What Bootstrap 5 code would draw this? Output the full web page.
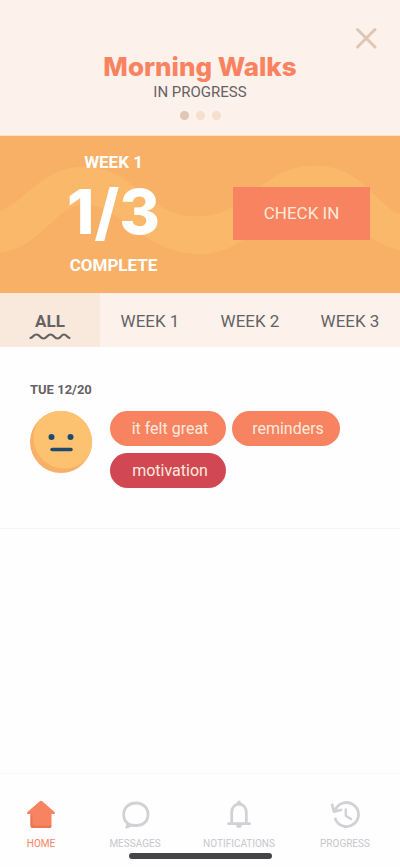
<!DOCTYPE html>
<html lang="en">
<head>
<meta charset="utf-8">
<meta name="viewport" content="width=device-width, initial-scale=1">
<title>Morning Walks</title>
<link href="https://cdn.jsdelivr.net/npm/bootstrap@5.3.0/dist/css/bootstrap.min.css" rel="stylesheet">
<style>
  body { font-family: Roboto, "Liberation Sans", sans-serif; background: #fefdff; color: #666264; font-size: 16px; }
  .goal-head { background: #fdf1ec; padding: 23px 20px 15px; border-bottom: 1px solid #fde0bd; }
  .close-btn { width: 28px; height: 28px; line-height: 0; }
  .goal-title { font-family: Inter, sans-serif; font-weight: 800; font-size: 26px; line-height: 31px; color: #f98360; }
  .goal-state { font-size: 15px; line-height: 20px; }
  .pager { gap: 7px; margin-top: 9px; }
  .pager button { width: 9px; height: 9px; background: #f6dfcc; }
  .pager button.current { background: #dfc6b5; }
  .week-banner { background: #f8b066; color: #fff; padding: 16px 30px 18px 0; }
  .wave { z-index: 0; }
  .banner-row { z-index: 1; }
  .week-label { font-size: 17px; line-height: 20px; font-weight: 700; }
  .week-count { font-family: Inter, sans-serif; font-size: 62px; line-height: 80px; font-weight: 800; margin-bottom: 3px; }
  .week-progress { padding-right: 6px; }
  .check-btn { --bs-btn-bg: #f78360; --bs-btn-color: #fdeadc; --bs-btn-hover-bg: #ee7651; --bs-btn-hover-color: #fff; width: 37%; height: 53px; font-size: 17px; }
  .week-tabs { background: #fdf1ec; }
  .week-tabs .nav-link { height: 54px; padding: 16px 0 0; font-size: 17px; line-height: 24px; color: #666264; border-radius: 0; }
  .week-tabs .nav-link.active { background: #f8e9dc; font-weight: 700; }
  .entry { padding: 34px 30px 40px; border-bottom: 1px solid #f8f3f3; }
  .entry-date { font-size: 13px; line-height: 18px; font-weight: 700; margin-bottom: 12px; }
  .entry-body { gap: 18px; }
  .tags { gap: 7px 6px; }
  .tag-btn { --bs-btn-color: #fdeadf; --bs-btn-hover-color: #fff; min-width: 116px; height: 35px; font-size: 16px; line-height: 20px; padding: 0 16px 0 20px; }
  .tag-btn.narrow { min-width: 108px; }
  .tag-orange { --bs-btn-bg: #f78360; --bs-btn-hover-bg: #ee7651; }
  .tag-red { --bs-btn-bg: #d14852; --bs-btn-hover-bg: #bd3d47; }
  .app-nav { border-top: 1px solid #faf7fa; height: 94px; }
  .app-links { display: grid; grid-template-columns: 41fr 53fr 51fr 55fr; padding-top: 25px; font-size: 10px; line-height: 14px; }
  .app-links a { color: #c9c7c9; gap: 6px; }
  .app-links a.active { color: #f78360; }
  .home-bar { width: 143px; height: 6px; margin-top: 2px; background: #444547; }
</style>
</head>
<body class="d-flex flex-column min-vh-100">
  <header class="goal-head text-center">
    <div class="d-flex justify-content-end">
      <button type="button" class="close-btn btn p-0 border-0" aria-label="Close">
        <svg width="28" height="28" viewBox="0 0 28 28" fill="none" stroke="#dfc6b3" stroke-width="3" stroke-linecap="round"><path d="M5.500 6.500 23 24M23 6.500 5.500 24"/></svg>
      </button>
    </div>
    <h1 class="goal-title m-0">Morning Walks</h1>
    <div class="goal-state">IN PROGRESS</div>
    <div class="pager d-flex justify-content-center">
      <button type="button" class="current border-0 p-0 rounded-circle" aria-label="Page 1"></button>
      <button type="button" class="border-0 p-0 rounded-circle" aria-label="Page 2"></button>
      <button type="button" class="border-0 p-0 rounded-circle" aria-label="Page 3"></button>
    </div>
  </header>

  <main class="flex-grow-1">
    <section class="week-banner position-relative overflow-hidden">
      <svg class="wave position-absolute top-0 start-0 w-100 h-100" viewBox="0 0 400 158" preserveAspectRatio="none" aria-hidden="true">
        <path fill="#fab96a" d="M0 76C28 64 42 31 85 31C135 31 145 81 197 81C250 81 260 30 315 30C362 30 376 70 400 79V115C352 103 354 69 315 69C270 69 248 119 200 119C145 119 120 69 85 69C55 69 40 114 0 117Z"/>
      </svg>
      <div class="banner-row position-relative d-flex align-items-center">
        <div class="week-progress flex-grow-1 text-center">
          <div class="week-label">WEEK 1</div>
          <div class="week-count">1/3</div>
          <div class="week-label">COMPLETE</div>
        </div>
        <button type="button" class="check-btn btn rounded-0 border-0 flex-shrink-0">CHECK IN</button>
      </div>
    </section>

    <nav class="week-tabs nav nav-fill flex-nowrap" aria-label="Weeks">
      <a class="nav-link active w-25 d-flex flex-column align-items-center" href="#all" aria-current="page">ALL
        <svg width="42" height="7" viewBox="0 0 42 7" fill="none" stroke="#666264" stroke-width="2.200" stroke-linecap="round"><path d="M1.500 5C5 4 4 1.500 7.500 1.500S11 5.500 14.500 5.500 18 1.500 21.500 1.500 25 5.500 28.500 5.500 32 1.500 35 1.500 37 4 40.500 5"/></svg>
      </a>
      <a class="nav-link w-25" href="#week1">WEEK 1</a>
      <a class="nav-link w-25" href="#week2">WEEK 2</a>
      <a class="nav-link w-25" href="#week3">WEEK 3</a>
    </nav>

    <article class="entry">
      <h2 class="entry-date">TUE 12/20</h2>
      <div class="entry-body d-flex align-items-start">
        <svg class="flex-shrink-0" width="62" height="62" viewBox="0 0 62 62" role="img" aria-label="Neutral mood">
          <defs><clipPath id="face"><circle cx="31" cy="31" r="31"/></clipPath></defs>
          <g clip-path="url(#face)"><rect width="62" height="62" fill="#f8b066"/><circle cx="34.500" cy="26.500" r="31" fill="#fdc26f"/></g>
          <circle cx="21.500" cy="26" r="3" fill="#1e4a72"/><circle cx="40.500" cy="26" r="3" fill="#1e4a72"/>
          <path d="M22 38.500H41" stroke="#1e4a72" stroke-width="3.500" stroke-linecap="round"/>
        </svg>
        <div class="tags d-flex flex-wrap">
          <button type="button" class="tag-btn tag-orange btn rounded-pill border-0">it felt great</button>
          <button type="button" class="tag-btn tag-orange narrow btn rounded-pill border-0">reminders</button>
          <button type="button" class="tag-btn tag-red btn rounded-pill border-0">motivation</button>
        </div>
      </div>
    </article>
  </main>

  <footer class="app-nav">
    <nav class="app-links" aria-label="Main">
      <a class="active d-flex flex-column align-items-center text-decoration-none" href="#home" aria-current="page">
        <svg width="32" height="32" viewBox="0 0 32 32" fill="#f78360"><path d="M14.500 2.500Q16 1 17.500 2.500L29.500 13Q31 15 28.500 15H26.500V26.500Q26.500 29 24.500 29H8Q5.500 29 5.500 26.500V15H3.500Q1 15 2.500 13Z"/><path fill="#ec7653" d="M5.500 15.500H7.500V25Q7.500 26.500 9.500 26.500H26.500Q26.500 29 24.500 29H8Q5.500 29 5.500 26.500Z"/></svg>
        HOME
      </a>
      <a class="d-flex flex-column align-items-center text-decoration-none" href="#messages">
        <svg width="32" height="32" viewBox="0 0 32 32" fill="none" stroke="#d3d1d3" stroke-width="2.800" stroke-linejoin="round"><path d="M7.800 23.500C5.500 21.500 4.700 18.500 4.700 15.500 4.700 8.500 10 4 17 4S29 8.500 29 15.500 24 26.500 17 26.500C14.500 26.500 12.500 26.300 10.500 26"/><path fill="#d3d1d3" stroke-width="1.600" d="M8 23Q8.500 26.500 7 28.700 10 28.500 12.500 26.500Z"/></svg>
        MESSAGES
      </a>
      <a class="d-flex flex-column align-items-center text-decoration-none" href="#notifications">
        <svg width="32" height="32" viewBox="0 0 32 32" fill="none" stroke="#d3d1d3" stroke-width="2.800" stroke-linecap="round"><path d="M8.700 24.500V13A7.300 8 0 0 1 23.300 13V24.500M5.500 24.700H26.500"/><circle cx="16" cy="3.500" r="1.900" fill="#d3d1d3" stroke="none"/><path fill="#d3d1d3" stroke="none" d="M12.800 25.500H19.200Q18.500 29 16 29T12.800 25.500Z"/></svg>
        NOTIFICATIONS
      </a>
      <a class="d-flex flex-column align-items-center text-decoration-none" href="#progress">
        <svg width="32" height="32" viewBox="0 0 32 32" fill="none" stroke="#d3d1d3" stroke-width="2.800" stroke-linecap="round" stroke-linejoin="round"><path d="M6 12A12 12 0 1 1 6.300 20"/><path d="M3.200 6 5 12.700 12 11"/><path stroke-width="2.400" d="M16.800 10.500V16.700L22 20"/></svg>
        PROGRESS
      </a>
    </nav>
    <div class="home-bar rounded-pill mx-auto"></div>
  </footer>
<script src="https://cdn.jsdelivr.net/npm/bootstrap@5.3.0/dist/js/bootstrap.bundle.min.js"></script>
</body>
</html>
